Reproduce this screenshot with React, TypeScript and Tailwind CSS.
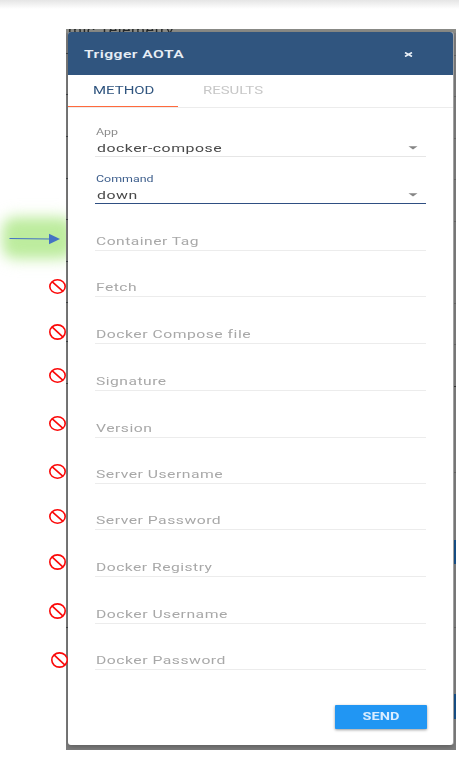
import React from "react";

type Field = { label: string; row: string; stretch: string };

const FIELDS: Field[] = [
  { label: "Container Tag", row: "h-[47px]", stretch: "scale-x-[1.42]" },
  { label: "Fetch", row: "h-[46px]", stretch: "scale-x-[1.42]" },
  { label: "Docker Compose file", row: "h-[47px]", stretch: "scale-x-[1.43]" },
  { label: "Signature", row: "h-[47px]", stretch: "scale-x-[1.42]" },
  { label: "Version", row: "h-[47px]", stretch: "scale-x-[1.43]" },
  { label: "Server Username", row: "h-[46px]", stretch: "scale-x-[1.43]" },
  { label: "Server Password", row: "h-[46px]", stretch: "scale-x-[1.43]" },
  { label: "Docker Registry", row: "h-[47px]", stretch: "scale-x-[1.42]" },
  { label: "Docker Username", row: "h-[47px]", stretch: "scale-x-[1.43]" },
  { label: "Docker Password", row: "h-[46px]", stretch: "scale-x-[1.43]" },
];

const BLOCKED = [
  "left-[49px] top-[279px] h-[15px]",
  "left-[49px] top-[324px] h-[16px]",
  "left-[49px] top-[368px] h-[15px]",
  "left-[49px] top-[416px] h-[15px]",
  "left-[49px] top-[464px] h-[15px]",
  "left-[49px] top-[509px] h-[15px]",
  "left-[49px] top-[554px] h-[16px]",
  "left-[49px] top-[603px] h-[16px]",
  "left-[51px] top-[652px] h-[16px]",
];

const LEFT_TICKS = ["top-[53px]", "top-[94px]", "top-[136px]", "top-[178px]", "top-[219px]", "top-[261px]", "top-[302px]", "top-[341px]", "top-[383px]", "top-[627px]"];
const RIGHT_TICKS = ["top-[55px]", "top-[96px]", "top-[138px]", "top-[179px]", "top-[221px]", "top-[303px]", "top-[344px]", "top-[472px]", "top-[627px]"];

function Wide({ children, className }: { children: React.ReactNode; className: string }) {
  return <span className={`inline-block origin-left whitespace-nowrap ${className}`}>{children}</span>;
}

function Caret() {
  return (
    <svg className="mr-[8px] mb-[6px] h-[4px] w-[10px]" viewBox="0 0 10 4">
      <path d="M0.5 0.3H9.5L5 3.5Z" fill="#858585" />
    </svg>
  );
}

function SelectRow({ label, value, active }: { label: string; value: string; active?: boolean }) {
  return (
    <div className={`flex h-[47px] flex-col justify-end border-b ${active ? "border-[#2f4f82]" : "border-[#e6e6e6]"}`}>
      <div className={`pl-px text-[9px] leading-[12px] ${active ? "text-[#3d5e8c]" : "text-[#8c8c8c]"}`}>
        <Wide className="scale-x-[1.38]">{label}</Wide>
      </div>
      <div className="flex h-[18px] items-end justify-between text-[11px] leading-[15px] text-[#484848]">
        <Wide className="ml-[2px] scale-x-[1.44] tracking-[0.35px]">{value}</Wide>
        <Caret />
      </div>
    </div>
  );
}

export default function App() {
  return (
    <div className="relative h-[758px] w-[459px] overflow-hidden bg-white pt-[29px] pl-[66px] font-[Roboto,'Liberation_Sans',sans-serif]">
      <div className="absolute inset-x-0 top-0 h-[9px] bg-linear-to-b from-[#e5e5e5] to-white" />
      <div className="absolute top-[220px] left-[5px] h-[36px] w-[66px] rounded-[10px] bg-[#bdec9e] shadow-[0_0_8px_3px_#c5efaa] blur-[6px]" />

      <div className="relative h-[721px] w-[390px] overflow-hidden bg-[#7e7e7e] pt-[3px] pl-[2px]">
        <div className="absolute inset-x-0 top-0 h-[4px] overflow-hidden bg-[#8a8b87]">
          <div className="absolute top-[-5px] left-[2px] text-[11px] leading-[13px] text-[#24282a]">
            <Wide className="scale-x-[1.44] tracking-[0.35px]">mic Telemetry</Wide>
          </div>
        </div>
        {LEFT_TICKS.map((t) => (
          <div key={t} className={`absolute left-0 -mt-[29px] h-px w-[2px] bg-[#414548] ${t}`} />
        ))}
        {RIGHT_TICKS.map((t) => (
          <div key={t} className={`absolute right-0 -mt-[29px] h-px w-[4px] bg-[#676767] ${t}`} />
        ))}
        <div className="absolute top-[357px] right-0 h-px w-[4px] bg-[#333]" />
        <div className="absolute top-[511px] right-0 h-[24px] w-[4px] bg-[#17518a]" />
        <div className="absolute top-[665px] right-0 h-[25px] w-[4px] bg-[#17518a]" />

        <div className="relative flex h-[713px] w-[385px] flex-col overflow-hidden rounded-[3px] bg-white shadow-[0_2px_5px_rgba(0,0,0,0.25),1px_0_0_#b4b4b4]">
          <header className="flex h-[43px] shrink-0 items-center justify-between bg-[#30557f] pt-[2px] pr-[40px] pl-[16px] text-[11px] font-semibold text-[#e6edf5]">
            <Wide className="translate-y-px scale-x-[1.43] tracking-[0.3px]">Trigger AOTA</Wide>
            <svg className="h-[5px] w-[9px]" viewBox="0 0 9 5">
              <path d="M1 0.5L8 4.5M8 0.5L1 4.5" stroke="#e6edf5" strokeWidth="1.7" />
            </svg>
          </header>
          <nav className="flex h-[33px] shrink-0 border-b border-[#ececec] text-[11px] leading-[32px]">
            <div className="h-[32px] w-[110px] border-b border-[#ff6a3d] pl-[25px] text-[#30557f]">
              <Wide className="scale-x-[1.36]">METHOD</Wide>
            </div>
            <div className="pl-[25px] text-[#c7c7c7]">
              <Wide className="scale-x-[1.36]">RESULTS</Wide>
            </div>
          </nav>
          <form className="flex flex-col pt-[2px] pr-[27px] pl-[27px]">
            <SelectRow label="App" value="docker-compose" />
            <SelectRow label="Command" value="down" active />
            {FIELDS.map((f) => (
              <div key={f.label} className={`flex items-end border-b border-[#ececec] pb-px pl-px text-[11px] leading-[15px] text-[#a8a8a8] ${f.row}`}>
                <Wide className={`tracking-[0.35px] ${f.stretch}`}>{f.label}</Wide>
              </div>
            ))}
          </form>
          <button type="button" className="mt-[35px] mr-[26px] flex h-[24px] w-[92px] shrink-0 items-center justify-center self-end rounded-[1px] bg-[#2196f3] pt-px text-[11px] font-bold text-[#d9edff] shadow-[0_1px_3px_rgba(0,0,0,0.4)]">
            <span className="inline-block scale-x-[1.32]">SEND</span>
          </button>
        </div>
      </div>

      <svg className="absolute top-[233px] left-[9px] h-[12px] w-[51px]" viewBox="0 0 51 12">
        <path d="M0.5 5.5L41 6" stroke="#4472c4" strokeWidth="1.1" />
        <path d="M40 0.8L51 6L40 11.2Z" fill="#4472c4" />
      </svg>
      {BLOCKED.map((pos) => (
        <svg key={pos} className={`absolute w-[17px] ${pos}`} viewBox="0 0 17 15" preserveAspectRatio="none">
          <ellipse cx="8.5" cy="7.5" rx="7.7" ry="6.7" fill="white" stroke="#fb0808" strokeWidth="1.6" />
          <path d="M3 2.7L14 12.3" stroke="#fb0808" strokeWidth="1.7" />
        </svg>
      ))}
    </div>
  );
}
